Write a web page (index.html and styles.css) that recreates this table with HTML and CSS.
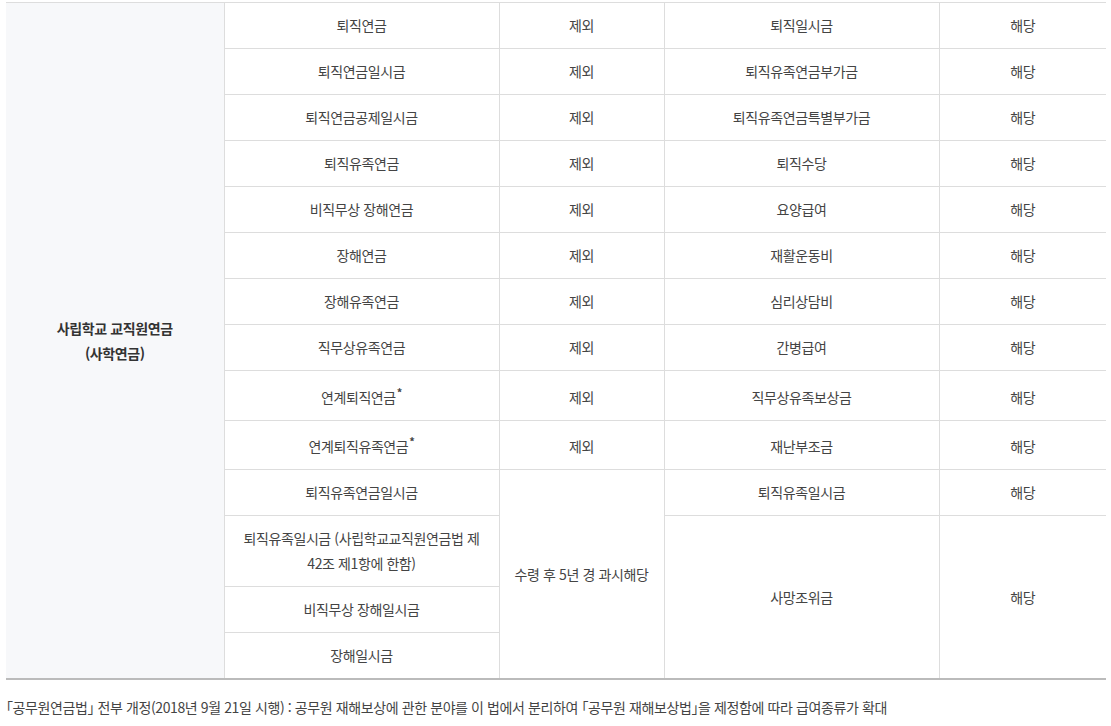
FILE: index.html
```html
<!DOCTYPE html>
<html lang="ko">
<head>
<meta charset="utf-8">
<link rel="stylesheet" href="styles.css">
</head>
<body>
<div class="wrap">
<table class="tbl">
<colgroup>
<col class="c1"><col class="c2"><col class="c3"><col class="c4"><col class="c5">
</colgroup>
<tbody>
<tr>
<th rowspan="14" class="head">사립학교 교직원연금<br>(사학연금)</th>
<td>퇴직연금</td><td>제외</td><td>퇴직일시금</td><td>해당</td>
</tr>
<tr><td>퇴직연금일시금</td><td>제외</td><td>퇴직유족연금부가금</td><td>해당</td></tr>
<tr><td>퇴직연금공제일시금</td><td>제외</td><td>퇴직유족연금특별부가금</td><td>해당</td></tr>
<tr><td>퇴직유족연금</td><td>제외</td><td>퇴직수당</td><td>해당</td></tr>
<tr><td>비직무상 장해연금</td><td>제외</td><td>요양급여</td><td>해당</td></tr>
<tr><td>장해연금</td><td>제외</td><td>재활운동비</td><td>해당</td></tr>
<tr><td>장해유족연금</td><td>제외</td><td>심리상담비</td><td>해당</td></tr>
<tr><td>직무상유족연금</td><td>제외</td><td>간병급여</td><td>해당</td></tr>
<tr class="ast-a"><td>연계퇴직연금<sup>*</sup></td><td>제외</td><td>직무상유족보상금</td><td>해당</td></tr>
<tr class="ast-b"><td>연계퇴직유족연금<sup>*</sup></td><td>제외</td><td>재난부조금</td><td>해당</td></tr>
<tr><td>퇴직유족연금일시금</td><td rowspan="4">수령 후 5년 경 과시해당</td><td>퇴직유족일시금</td><td>해당</td></tr>
<tr><td>퇴직유족일시금 (사립학교교직원연금법 제<br>42조 제1항에 한함)</td><td rowspan="3">사망조위금</td><td rowspan="3">해당</td></tr>
<tr><td>비직무상 장해일시금</td></tr>
<tr><td>장해일시금</td></tr>
</tbody>
</table>
<p class="note">「공무원연금법」 전부 개정(2018년 9월 21일 시행) : 공무원 재해보상에 관한 분야를 이 법에서 분리하여 「공무원 재해보상법」을 제정함에 따라 급여종류가 확대</p>
</div>
</body>
</html>
```
FILE: styles.css
```css
html, body {
  margin: 0;
  padding: 0;
  background: #fff;
}
body {
  font-family: "Noto Sans CJK KR", "Noto Sans", sans-serif;
  color: #444;
  font-size: 14px;
}
.wrap {
  padding: 2px 0 0 6px;
  width: 1100px;
}
.tbl {
  width: 1100px;
  table-layout: fixed;
  border-collapse: collapse;
  border-top: 1px solid #ddd;
  border-bottom: 2px solid #bbb;
}
.c1 { width: 218px; }
.c2 { width: 275px; }
.c3 { width: 165px; }
.c4 { width: 275px; }
.c5 { width: 167px; }
.tbl th,
.tbl td {
  padding: 10px 8px;
  line-height: 25px;
  text-align: center;
  vertical-align: middle;
  border-top: 1px solid #ddd;
  border-left: 1px solid #ddd;
  font-weight: 400;
  letter-spacing: -0.4px;
}
.tbl th.head {
  border-left: none;
  background: #f7f8fa;
  font-weight: 700;
  color: #333;
}
.tbl .ast-a td {
  padding-top: 14px;
}
.tbl .ast-b td {
  padding-top: 13px;
}
.tbl sup {
  font-size: 11px;
  line-height: 0;
  font-weight: 700;
  vertical-align: 6px;
  margin-left: 1px;
}
.note {
  margin: 15px 0 0 0;
  line-height: 25px;
  letter-spacing: -0.4px;
  color: #444;
  font-feature-settings: "halt" 1;
}
```
